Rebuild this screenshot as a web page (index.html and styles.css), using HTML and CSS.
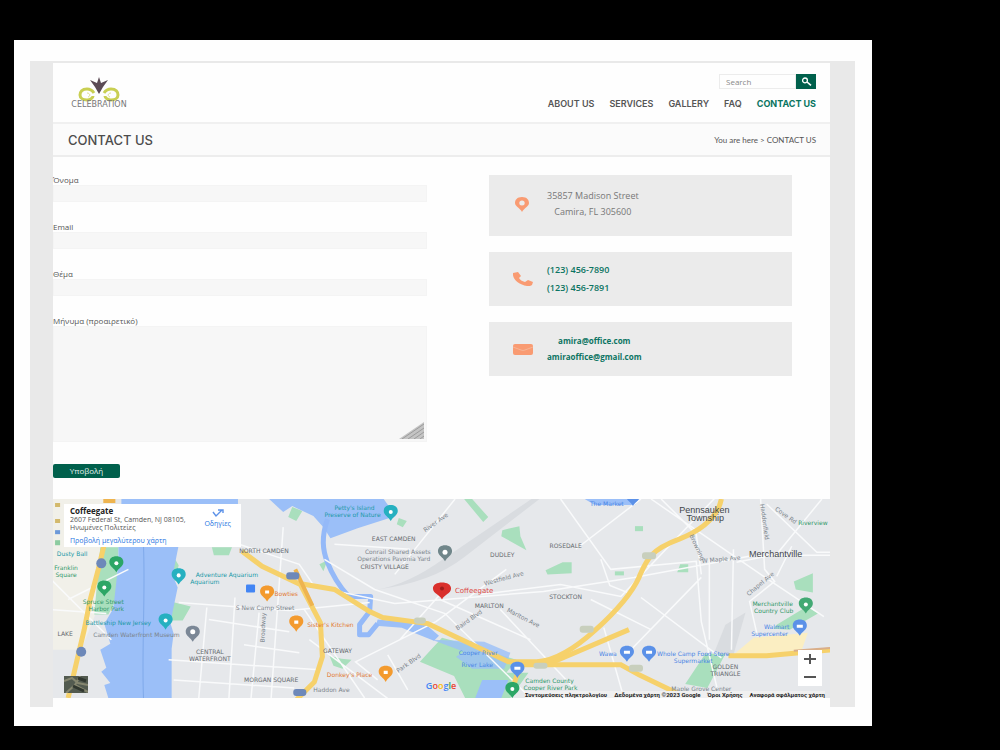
FILE: index.html
```html
<!DOCTYPE html>
<html lang="el">
<head>
<meta charset="utf-8">
<meta name="viewport" content="width=device-width, initial-scale=1">
<title>Contact us</title>
<link rel="stylesheet" href="styles.css">
</head>
<body>
<div class="sheet">
<div class="frame">
<div class="site">
  <header class="header">
    <a class="logo" href="#" aria-label="Celebration">
      <svg width="56" height="34" viewBox="0 0 56 34">
        <g fill="none" stroke="#c9cf52" stroke-width="3">
          <path d="M23 17c-2-3-4-4-7-4-5 0-7 3-7 6s3 5 7 5c3 0 6-2 6-4"/>
          <path d="M33 17c2-3 4-4 7-4 5 0 7 3 7 6s-3 5-7 5c-3 0-6-2-6-4"/>
          <path d="M16 17c3 0 4 3 1 4M40 17c-3 0-4 3-1 4" stroke-width="1" stroke="#dde08e"/>
        </g>
        <path fill="#5b4a55" d="M28 1l2 6 7-3-5 7-4 7-4-7-5-7 7 3z"/>
        <text x="28" y="31" text-anchor="middle" class="logo-text">CELEBRATION</text>
      </svg>
    </a>
    <div class="header-tools">
      <form class="search">
        <input type="search" placeholder="Search" aria-label="Search">
        <button type="button" aria-label="Search"><svg width="11" height="9" viewBox="0 0 11 9"><circle cx="4" cy="3.4" r="2.4" fill="none" stroke="#fff" stroke-width="1.3"/><path d="M6 5l4 3.400" stroke="#fff" stroke-width="1.600"/></svg></button>
      </form>
      <nav class="nav">
        <a href="#">ABOUT US</a><a href="#">SERVICES</a><a href="#">GALLERY</a><a href="#">FAQ</a><a class="active" href="#">CONTACT US</a>
      </nav>
    </div>
  </header>
  <div class="title-bar">
    <h1>CONTACT US</h1>
    <p>You are here &gt; CONTACT US</p>
  </div>
  <main>
    <div class="content">
      <form class="form">
        <div class="field"><label for="name">Όνομα</label><input id="name" type="text"></div>
        <div class="field"><label for="email">Email</label><input id="email" type="email"></div>
        <div class="field"><label for="subject">Θέμα</label><input id="subject" type="text"></div>
        <div class="field message"><label for="message">Μήνυμα (προαιρετικό)</label><textarea id="message"></textarea>
          <svg class="grip" width="25" height="17" viewBox="0 0 25 17"><path d="M0 17L25 0V17Z" fill="#c4c4c4"/><path d="M3 17L25 2M9 17L25 6M15 17L25 10M21 17L25 14" stroke="#9c9c9c"/></svg>
        </div>
        <button class="submit" type="button">Υποβολή</button>
      </form>
      <aside class="cards">
        <div class="card address">
          <svg width="20" height="18" viewBox="0 0 20 18"><path fill="#f99b72" fill-rule="evenodd" d="M9 2C4 2 2 5 2 8c0 3.500 5 5 7 9 2-4 7-5.500 7-9 0-3-2-6-7-6zm0 3.500a2.700 2.500 0 1 1 0 5 2.700 2.500 0 0 1 0-5z"/></svg>
          <p><span>35857 Madison Street</span><span>Camira, FL 305600</span></p>
        </div>
        <div class="card phone">
          <svg width="20" height="18" viewBox="0 0 20 18"><path fill="#f99b72" d="M0 3l5-1 3 4-2 2c1 2 3 3 6 4l3-2 5 2-1 3c-1 1-3 1-5 1C6 15-1 9 0 3z"/></svg>
          <p><a href="#">(123) 456-7890</a><a href="#">(123) 456-7891</a></p>
        </div>
        <div class="card mail">
          <svg width="20" height="18" viewBox="0 0 20 18"><rect y="4" width="20" height="11" rx="2" fill="#f99b72"/><path d="M0 7l8 3q2 1 4 0l8-3" fill="none" stroke="#f6b596"/></svg>
          <p><a href="#">amira@office.com</a><a href="#">amiraoffice@gmail.com</a></p>
        </div>
      </aside>
    </div>
    <section class="map" aria-label="Map">
      <svg class="map-art" viewBox="53 500 777 198" preserveAspectRatio="xMidYMid slice">
        <defs>
          <path id="pin" d="M0 8C-2 4-7 2-7-2-7-6-4-8 0-8s7 2 7 6C7 2 2 4 0 8z"/>
        </defs>
        <rect x="53" y="500" width="777" height="198" fill="#e6e8eb"/>
        <path fill="#f1f0e9" d="M53 500h60l-10 100-20 50H53z"/>
        <g fill="#d9dce0">
          <path d="M378 590q30-5 65-30l88-60h8l-75 58q-32 25-86 32z"/>
          <path d="M712 655l12-30 20-12-12 42z"/>
        </g>
        <g fill="#a9dfbd">
          <path d="M102 548h18l-2 52-8 15H96zM180 566l-8 36 20 5-8 14h-18l5-70zM293 508l10 4-6 10-8-4zM464 500h8l16 18-5 5zM502 531l17-4 1 10 6 14-25-14zM545 571l17-8h9v11l-24 1zM679 565h8v8h-11zM792 582l19-8v19l-17-3zM420 662l22-24 26 7 48 15-10 13h22l-18 25h-45l-11-22zM330 656l12 3 10 1-9 9-9-3zM684 684l20-30h20l-18 34zM775 625l30-18 11 7-28 16-16-1zM399 519l8 3-4 6-6-3zM320 565l8-4-4 11z"/>
          <path d="M213 548h20l-3 8h-15z"/>
          <rect x="634" y="527" width="8" height="5"/><rect x="614" y="572" width="9" height="4"/>
        </g>
        <g fill="#9bbff8">
          <path d="M120 546h60l-6 30 5 12-5 24-2 12 3 10-2 15v49h-63l-4-13 6-2-9-11 5-4-6-18 10-6-6-20 9-15 5-45z"/>
          <path d="M123 507v-7h116v8zM270 500h114l12 17-38 12-27 10-7-11-10-11-21-10-9 6z"/>
          <path d="M378 620l47 4 14 12-5 5-20-8-12-5-26-2z"/>
          <path d="M432 640l52 2 26 11-6 16h-32l-16-12 8-5z" opacity=".8"/>
          <path d="M482 680h26l-7 18h-26z"/>
          <path d="M584 500h54l-4 6h-40z"/>
        </g>
        <path d="M328 520c-6 18-5 30 0 43s13 25 21 34h22l-1 15-10 13v10h9l9-11" fill="none" stroke="#94b9f8" stroke-width="5" stroke-linejoin="round"/>
        <path d="M145 547c2 50-2 105 0 151" fill="none" stroke="#7fa9ea"/>
        <g fill="none" stroke="#f9fafb" stroke-width="1.500">
          <path d="M240 545l60 20 15 22 80 17 148-12 90-14 120-22h77M378 680l-22-18 80-40 70-52M53 610l55 4M180 603l110 8 80-8M272 698l12-170M230 698l6-100M200 698l8-90M252 698l8-85M305 610l60 88M310 640l80 60M325 560l50 30 70 24 85 84M440 600l90 40M455 500l-60 75M410 550l-75-5M480 595l80-10 60 12 105-110M560 500l50 70 85-8 5 60 18 76M650 500l112 77 60 40M660 500l35 35 5 40M575 550l65-50M500 610l75 80M640 598l80 60M623 698l-20-70M600 560l9 26 20 8M700 578l-70 72M708 560v80M732 550l-2 100M759 500l4 70 10 12-25 20 8 35M765 505l50 48h15M820 500l-45 55-40 8M53 580l60 60M70 600l60-30M775 577l15-30M590 600l60 30M400 640l40-45M408 690l-20-35M245 645l55 8M170 660l150 10M175 680l120 8M210 620l80 12"/>
        </g>
        <path fill="#fbeec2" d="M732 655l20-17 54-5-6 17-64 8z"/>
        <g fill="none" stroke="#f6d16b" stroke-width="5">
          <path d="M243 552l20 15 38 18 20 38 2 34-8 25-18 18M300 584l35 6 35 22 13 6 45 6 80 38h45l75-32"/>
          <path d="M720 500q-5 25-42 40c-30 11-33 22-40 38q-10 22-43 52t-58 32M522 664l-6 13-3 9M520 665h100l18 10 50 24M727 656h38l65-6"/>
          <path d="M106 545l-6 25-8 30-6 30-16 68"/>
        </g>
        <path d="M105 502h12M296 570l17 36" stroke="#eeb44f" stroke-width="4"/>
        <path d="M792 651l38-3" stroke="#d9ae8b" stroke-width="2"/>
        <g fill="#c8cfbd"><rect x="641" y="553" width="14" height="7" rx="3"/><rect x="579" y="626" width="14" height="7" rx="3"/><rect x="628" y="665" width="14" height="7" rx="3"/><rect x="533" y="663" width="14" height="6" rx="3"/><rect x="414" y="618" width="12" height="6" rx="3"/></g>
        <g fill="#6d88b9"><circle cx="103" cy="564" r="5"/><circle cx="83" cy="652" r="5"/><rect x="287" y="573" width="13" height="7" rx="3"/><rect x="294" y="689" width="13" height="7" rx="3"/></g>
        <rect x="247" y="585" width="9" height="8" fill="#4285f4" rx="1"/>
        <path d="M57 504h5v4h-5zM57 520h5v4h-5z" fill="#d3b96c"/><path d="M57 531h5v4h-5z" fill="#6d99d9"/><path d="M57 541h5v5h-5z" fill="#8ccba0"/>
        <g>
          <use href="#pin" x="118" y="565" fill="#2ca666"/><use href="#pin" x="106" y="589" fill="#2ca666"/><use href="#pin" x="804" y="606" fill="#43a974"/><use href="#pin" x="512" y="690" fill="#2ca666"/>
          <use href="#pin" x="180" y="577" fill="#26b0c0"/><use href="#pin" x="167" y="622" fill="#26b0c0"/><use href="#pin" x="391" y="514" fill="#26b0c0"/>
          <use href="#pin" x="194" y="634" fill="#7b8796"/><use href="#pin" x="445" y="554" fill="#70868a"/>
          <use href="#pin" x="268" y="594" fill="#f39a2e"/><use href="#pin" x="297" y="624" fill="#f39a2e"/><use href="#pin" x="386" y="674" fill="#f39a2e"/>
          <use href="#pin" x="517" y="670" fill="#5b91e8"/><use href="#pin" x="626" y="654" fill="#5b91e8"/><use href="#pin" x="648" y="654" fill="#5b91e8"/><use href="#pin" x="798" y="628" fill="#5b91e8"/><use href="#pin" x="632" y="499" fill="#5b91e8"/>
          <path d="M442 600c-2-5-9-6-9-11 0-4 4-6 9-6s9 2 9 6c0 5-7 6-9 11z" fill="#d9302c"/>
        </g>
        <g fill="#fff"><circle cx="118" cy="564" r="2"/><circle cx="106" cy="588" r="2"/><circle cx="804" cy="605" r="2"/><circle cx="512" cy="689" r="2"/><circle cx="180" cy="576" r="2"/><circle cx="167" cy="621" r="2"/><circle cx="391" cy="513" r="2"/><circle cx="194" cy="632" r="2.500"/><circle cx="445" cy="553" r="2.500"/><path d="M266 591h4v3h-4zM295 621h4v3h-4zM384 671h4v3h-4zM514 667h6v3h-6zM623 651h6v3h-6zM645 651h6v3h-6zM795 625h6v3h-6z"/></g>
        <circle cx="442" cy="589" r="2" fill="#9f1d1c"/>
        <g class="t grey">
          <text x="394" y="542">EAST CAMDEN</text><text x="385" y="570">CRISTY VILLAGE</text><text x="502" y="558">DUDLEY</text><text x="565" y="549">ROSEDALE</text><text x="565" y="600">STOCKTON</text><text x="489" y="608">MARLTON</text><text x="338" y="653">GATEWAY</text><text x="211" y="654">CENTRAL</text><text x="211" y="661">WATERFRONT</text><text x="272" y="682">MORGAN SQUARE</text><text x="265" y="554">NORTH CAMDEN</text><text x="67" y="636">LAKE</text><text x="724" y="669">GOLDEN</text><text x="724" y="676">TRIANGLE</text>
        </g>
        <g class="t slate"><text x="398" y="555">Conrail Shared Assets</text><text x="394" y="562">Operations Pavonia Yard</text><text x="266" y="610">S New Camp Street</text><text x="138" y="637">Camden Waterfront Museum</text></g>
        <g class="t town"><text x="703" y="514">Pennsauken</text><text x="704" y="522">Township</text><text x="774" y="558">Merchantville</text></g>
        <g class="t teal"><text x="228" y="578">Adventure Aquarium</text><text x="206" y="585">Aquarium</text><text x="74" y="557">Dusty Ball</text><text x="355" y="511">Petty's Island</text><text x="353" y="518">Preserve of Nature</text><text x="120" y="625">Battleship New Jersey</text></g>
        <g class="t green"><text x="105" y="604">Spruce Street</text><text x="108" y="611">Harbor Park</text><text x="68" y="571">Franklin</text><text x="68" y="578">Square</text><text x="771" y="606">Merchantville</text><text x="772" y="613">Country Club</text><text x="549" y="683">Camden County</text><text x="550" y="690">Cooper River Park</text><text x="811" y="526">Riverview</text></g>
        <g class="t orange"><text x="287" y="597">Bowties</text><text x="331" y="627">Sister's Kitchen</text><text x="350" y="677">Donkey's Place</text></g>
        <g class="t blue"><text x="607" y="656">Wawa</text><text x="692" y="656">Whole Camp Food Store</text><text x="692" y="663">Supermarket</text><text x="775" y="629">Walmart</text><text x="768" y="636">Supercenter</text><text x="478" y="655">Cooper River</text><text x="477" y="667">River Lake</text><text x="606" y="507">The Market</text></g>
        <g class="t slate"><text transform="translate(437 525) rotate(-35)">River Ave</text><text transform="translate(504 581) rotate(-15)">Westfield Ave</text><text transform="translate(332 692)">Haddon Ave</text><text transform="translate(410 665) rotate(-35)">Park Blvd</text><text transform="translate(470 622) rotate(-35)">Baird Blvd</text><text transform="translate(522 620) rotate(27)">Marlton Ave</text><text transform="translate(694 549) rotate(65)">Browning</text><text transform="translate(720 562) rotate(-5)">W Maple Ave</text><text transform="translate(760 586) rotate(-40)">Chapel Ave</text><text transform="translate(783 518) rotate(35)">Cove Rd</text><text transform="translate(761 523) rotate(82)">Haddonfield</text><text transform="translate(266 628) rotate(-88)">Broadway</text><text x="700" y="691">Maple Grove Center</text></g>
        <text x="474" y="594" class="t place">Coffeegate</text>
        <text x="441" y="689" class="google"><tspan fill="#4285f4">G</tspan><tspan fill="#ea4335">o</tspan><tspan fill="#fbbc05">o</tspan><tspan fill="#4285f4">g</tspan><tspan fill="#34a853">l</tspan><tspan fill="#ea4335">e</tspan></text>
      </svg>
      <div class="place-card">
        <div class="place-info">
          <strong>Coffeegate</strong>
          <span>2607 Federal St, Camden, NJ 08105,</span>
          <span>Ηνωμένες Πολιτείες</span>
          <a href="#">Προβολή μεγαλύτερου χάρτη</a>
        </div>
        <a class="directions" href="#"><svg width="12" height="9" viewBox="0 0 12 9"><path d="M1 3l3 4 6-6M6 1h5v3" fill="none" stroke="#5b91e8" stroke-width="1.400"/></svg>Οδηγίες</a>
      </div>
      <button class="satellite" type="button" aria-label="Satellite view"><svg width="24" height="17" viewBox="0 0 24 17"><path fill="#535b50" d="M0 0h24v17H0z"/><path d="M0 5l8-3 6 5 10 2M2 17l9-8 13 7M16 0l-5 9" fill="none" stroke="#85866f" stroke-width="2"/><path d="M9 10l11 5M14 2l8 3" stroke="#30372f" stroke-width="3"/></svg></button>
      <div class="zoom"><button type="button" aria-label="Zoom in"><svg width="12" height="10" viewBox="0 0 12 10"><path d="M0 5h12M6 0v10" stroke="#555" stroke-width="2"/></svg></button><button type="button" aria-label="Zoom out"><svg width="12" height="10" viewBox="0 0 12 10"><path d="M0 5h12" stroke="#555" stroke-width="2"/></svg></button></div>
      <div class="credits"><button type="button">Συντομεύσεις πληκτρολογίου</button><span>Δεδομένα χάρτη ©2023 Google</span><a href="#">Όροι Χρήσης</a><a href="#">Αναφορά σφάλματος χάρτη</a></div>
    </section>
  </main>
</div>
</div>
</div>
</body>
</html>
```

FILE: styles.css
```css
* { box-sizing: border-box; }
body { margin: 0; padding: 40px 128px 24px 14px; background: #000; color: #555; font-family: "Open Sans", "DejaVu Sans", sans-serif; font-size: 8px; line-height: 10px; }
button, input, textarea { font: inherit; border: 0; padding: 0; margin: 0; }
a { color: inherit; text-decoration: none; }
p, h1 { margin: 0; }
svg { display: block; flex: none; }

.sheet { background: #fefefe; padding: 21px 17px 19px 16px; }
.frame { background: #e9e9e9; padding: 2px 25px 0 23px; }
.site { background: #fefefe; padding-bottom: 9px; }

.header { display: flex; justify-content: space-between; padding: 11px 14px 11px 18px; min-height: 59px; }
.logo { padding-top: 2px; }
.logo-text { font-family: "DejaVu Sans", sans-serif; font-size: 8px; fill: #777; }
.header-tools { display: flex; flex-direction: column; align-items: flex-end; gap: 9px; }
.search { display: flex; }
.search input { width: 77px; height: 15px; border: 1px solid #ececec; padding-left: 6px; background: #fefefe; color: #888; }
.search input::placeholder { color: #888; }
.search button { display: grid; place-items: center; width: 20px; height: 15px; background: #00604c; }
.nav { display: flex; gap: 15px; font-family: Inter, sans-serif; font-weight: 600; font-size: 9px; line-height: 12px; color: #555; }
.nav .active { color: #087460; font-weight: 700; }

.title-bar { display: flex; justify-content: space-between; align-items: center; height: 35px; padding: 0 14px 0 15px; background: #fbfbfb; border-top: 2px solid #f0f0f0; border-bottom: 2px solid #ededed; }
.title-bar h1 { font-family: Inter, sans-serif; font-size: 13px; font-weight: 500; line-height: 18px; color: #4c4c4c; }
.title-bar p { font-family: Lato, sans-serif; }

.content { display: grid; grid-template-columns: 374fr 303fr; column-gap: 62px; padding: 18px 38px 21px 0; align-items: start; }
.form { display: flex; flex-direction: column; align-items: stretch; }
.field { display: flex; flex-direction: column; margin-bottom: 20px; }
.field input { height: 17px; background: #f7f7f7; border: 1px solid #f4f4f4; width: 100%; }
.field.message { position: relative; margin-bottom: 22px; }
.field textarea { display: block; height: 116px; background: #f7f7f7; border: 1px solid #f4f4f4; resize: none; width: 100%; }
.grip { position: absolute; right: 3px; bottom: 3px; pointer-events: none; }
.submit { align-self: flex-start; width: 67px; height: 14px; border-radius: 2px; background: #00604c; color: #e4f1ee; }

.cards { display: flex; flex-direction: column; gap: 16px; }
.card { display: flex; align-items: center; gap: 14px; padding: 0 24px; background: #ebebeb; height: 54px; font-size: 9px; line-height: 18px; }
.card p { display: flex; flex-direction: column; align-items: center; }
.card.address { height: 61px; line-height: 16px; padding-bottom: 4px; color: #777; }
.card a { color: #0b7462; font-weight: 600; }
.card.mail { font-size: 8px; line-height: 16px; }
.card.mail a { font-weight: 700; }

.map { position: relative; height: 199px; overflow: hidden; }
.map-art { width: 100%; height: 100%; }
.t { font-family: "DejaVu Sans", sans-serif; font-size: 6px; text-anchor: middle; }
.grey { fill: #666b70; }
.slate { fill: #7c858c; }
.town { font-family: "Liberation Sans", sans-serif; font-size: 9px; fill: #3f454a; }
.teal { fill: #2199a8; }
.green { fill: #31986a; }
.orange { fill: #e27a35; }
.blue { fill: #4b86e5; }
.place { fill: #dd4a45; font-size: 7px; }
.google { font-size: 9px; font-weight: 600; text-anchor: middle; }
.place-card { position: absolute; left: 11px; top: 5px; width: 177px; height: 43px; padding: 2px 10px 0 6px; display: flex; justify-content: space-between; background: #fff; color: #555; font-size: 7px; line-height: 8px; white-space: nowrap; }
.place-info { display: flex; flex-direction: column; }
.place-info strong { font-size: 8px; line-height: 10px; color: #222; }
.place-info a { margin-top: 5px; color: #2875e2; }
.directions { display: flex; flex-direction: column; align-items: center; gap: 2px; padding-top: 3px; color: #2875e2; }
.satellite { position: absolute; left: 11px; bottom: 5px; background: none; }
.zoom { position: absolute; right: 8px; bottom: 12px; display: flex; flex-direction: column; background: #fff; }
.zoom button { width: 24px; height: 18px; display: grid; place-items: center; background: none; }
.credits { position: absolute; right: 5px; bottom: 0; display: flex; gap: 7px; font-family: Roboto, sans-serif; font-size: 6px; line-height: 7px; font-weight: 700; color: #222; background: #f0f0f0; white-space: nowrap; }
.credits button { background: none; color: inherit; }
```
